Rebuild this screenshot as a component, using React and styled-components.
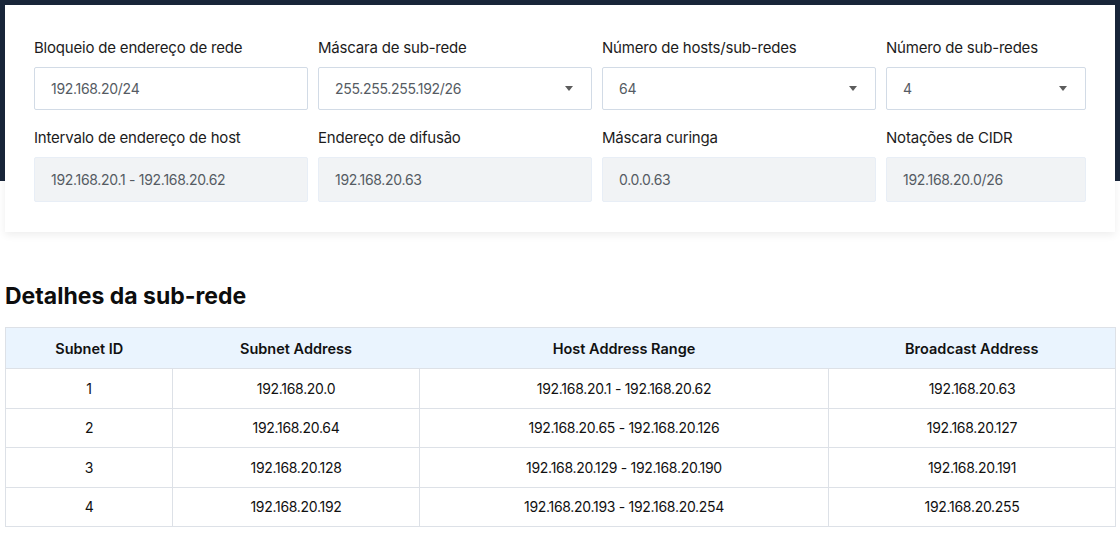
import React from 'react'
import styled, { createGlobalStyle } from 'styled-components'

const GlobalStyle = createGlobalStyle`
    body {
        margin: 0;
        background: #ffffff;
        font-family: Inter, "Noto Sans", sans-serif;
        color: #111;
    }
`

const Page = styled.div`
    width: 1120px;
    min-height: 534px;
    box-sizing: border-box;
    padding: 5px 5px 0;
    background: linear-gradient(#19263a 0, #19263a 181px, #ffffff 181px);
`

const Card = styled.div`
    background: #fff;
    padding: 33px 30px 30px 29px;
    box-shadow: 0 3px 8px rgba(0, 0, 0, 0.07);
`

const Fields = styled.div`
    display: grid;
    grid-template-columns: 274px 274px 274px 200px;
    column-gap: 10px;
    row-gap: 18px;
`

const Field = styled.div`
    display: flex;
    flex-direction: column;
`

const Label = styled.label`
    font-size: 15px;
    line-height: 20px;
    color: #1c1c1c;
    margin-bottom: 9px;
    white-space: nowrap;
    letter-spacing: -0.2px;
`

const Box = styled.div`
    box-sizing: border-box;
    display: flex;
    align-items: center;
    justify-content: space-between;
    padding: 0 16px 0 16px;
    font-size: 14px;
    letter-spacing: -0.3px;
    color: #555b63;
    border-radius: 2px;
    border: 1px solid ${p => (p.$readonly ? '#e8eef6' : '#d2dbe6')};
    background: ${p => (p.$readonly ? '#f1f3f5' : '#fff')};
    height: ${p => (p.$readonly ? '45px' : '43px')};
`

const Caret = styled.span`
    width: 0;
    height: 0;
    border-left: 4.5px solid transparent;
    border-right: 4.5px solid transparent;
    border-top: 5px solid #5c5c5c;
    margin-right: 2px;
`

const Title = styled.h2`
    margin: 51px 0 18px;
    font-size: 23px;
    line-height: 26px;
    font-weight: 700;
    color: #0d0d0d;
    letter-spacing: 0;
`

const Table = styled.table`
    width: 1110px;
    border-collapse: collapse;
    table-layout: fixed;
    border: 1px solid #dde1e7;
`

const Th = styled.th`
    height: 40px;
    padding: 0;
    background: #eaf4fe;
    font-size: 14.5px;
    font-weight: 600;
    color: #111;
    text-align: center;
`

const Td = styled.td`
    height: 38.5px;
    padding: 0;
    font-size: 14px;
    letter-spacing: -0.3px;
    color: #111;
    text-align: center;
    border: 1px solid #dde1e7;
`

const inputs = [
    { label: 'Bloqueio de endereço de rede', value: '192.168.20/24' },
    { label: 'Máscara de sub-rede', value: '255.255.255.192/26', select: true },
    { label: 'Número de hosts/sub-redes', value: '64', select: true },
    { label: 'Número de sub-redes', value: '4', select: true },
]

const results = [
    { label: 'Intervalo de endereço de host', value: '192.168.20.1 - 192.168.20.62' },
    { label: 'Endereço de difusão', value: '192.168.20.63' },
    { label: 'Máscara curinga', value: '0.0.0.63' },
    { label: 'Notações de CIDR', value: '192.168.20.0/26' },
]

const rows = [
    ['1', '192.168.20.0', '192.168.20.1 - 192.168.20.62', '192.168.20.63'],
    ['2', '192.168.20.64', '192.168.20.65 - 192.168.20.126', '192.168.20.127'],
    ['3', '192.168.20.128', '192.168.20.129 - 192.168.20.190', '192.168.20.191'],
    ['4', '192.168.20.192', '192.168.20.193 - 192.168.20.254', '192.168.20.255'],
]

function App() {
    return (
        <Page>
            <GlobalStyle />
            <Card>
                <Fields>
                    {inputs.map(f => (
                        <Field key={f.label}>
                            <Label>{f.label}</Label>
                            <Box>
                                <span>{f.value}</span>
                                {f.select && <Caret />}
                            </Box>
                        </Field>
                    ))}
                    {results.map(f => (
                        <Field key={f.label}>
                            <Label>{f.label}</Label>
                            <Box $readonly>{f.value}</Box>
                        </Field>
                    ))}
                </Fields>
            </Card>
            <Title>Detalhes da sub-rede</Title>
            <Table>
                <colgroup>
                    <col style={{ width: 167 }} />
                    <col style={{ width: 247 }} />
                    <col style={{ width: 409 }} />
                    <col style={{ width: 287 }} />
                </colgroup>
                <thead>
                    <tr>
                        <Th>Subnet ID</Th>
                        <Th>Subnet Address</Th>
                        <Th>Host Address Range</Th>
                        <Th>Broadcast Address</Th>
                    </tr>
                </thead>
                <tbody>
                    {rows.map(r => (
                        <tr key={r[0]}>
                            {r.map((c, i) => <Td key={i}>{c}</Td>)}
                        </tr>
                    ))}
                </tbody>
            </Table>
        </Page>
    )
}

export default App
